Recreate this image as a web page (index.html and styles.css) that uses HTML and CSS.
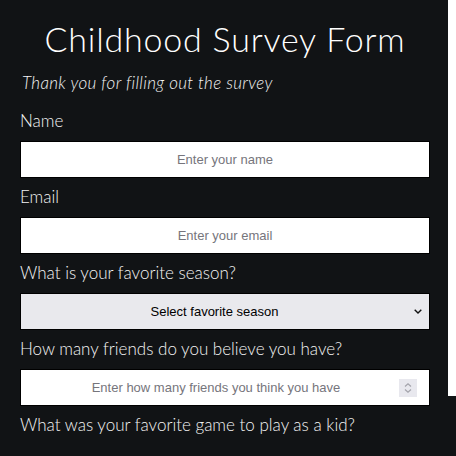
FILE: index.html
```html
<!DOCTYPE html>
<html lang="en">
<head>
<meta charset="utf-8">
<title>Childhood Survey Form</title>
<link rel="stylesheet" href="styles.css">
</head>
<body>
<div class="layout">
  <main class="page">
    <h1 class="title">Childhood Survey Form</h1>
    <p class="intro">Thank you for filling out the survey</p>
    <form class="survey">
      <label class="label" for="name">Name</label>
      <input class="box field" id="name" type="text" placeholder="Enter your name">

      <label class="label" for="email">Email</label>
      <input class="box field" id="email" type="email" placeholder="Enter your email">

      <label class="label" for="season">What is your favorite season?</label>
      <div class="box select-box">
        <select class="select" id="season">
          <option>Select favorite season</option>
          <option>Spring</option>
          <option>Summer</option>
          <option>Fall</option>
          <option>Winter</option>
        </select>
        <svg class="chevron" width="8" height="5" viewBox="0 0 8 5" aria-hidden="true"><path d="M0.7 0.7 L4 4 L7.3 0.7" fill="none" stroke="#111" stroke-width="1.4"/></svg>
      </div>

      <label class="label" for="friends">How many friends do you believe you have?</label>
      <div class="box number-box">
        <input class="number" id="friends" type="number" placeholder="Enter how many friends you think you have">
        <span class="spinner" aria-hidden="true">
          <svg width="18" height="18" viewBox="0 0 18 18"><path d="M6 7.5 L9 4.8 L12 7.5" fill="none" stroke="#a3a3ab" stroke-width="1.2"/><path d="M6 10.5 L9 13.2 L12 10.5" fill="none" stroke="#a3a3ab" stroke-width="1.2"/></svg>
        </span>
      </div>

      <label class="label" for="game">What was your favorite game to play as a kid?</label>
    </form>
  </main>
  <aside class="strip"></aside>
</div>
</body>
</html>
```

FILE: styles.css
```css
* { box-sizing: border-box; }

html, body {
  margin: 0;
  padding: 0;
}

body {
  background: #111315;
  color: #f4f4f4;
  font-family: Lato, "Open Sans", sans-serif;
  font-weight: 300;
}

.layout {
  display: flex;
  align-items: flex-start;
}

.page {
  width: 448px;
  padding: 0 18px 0 20px;
}

.strip {
  width: 8px;
  height: 396px;
  background: #ffffff;
}

.title {
  margin: 19px 0 0;
  font-size: 34px;
  line-height: 40px;
  font-weight: 300;
  letter-spacing: 0.8px;
  text-align: center;
  color: #ffffff;
}

.intro {
  margin: 14px 0 0 2px;
  font-size: 17px;
  line-height: 20px;
  font-style: italic;
  letter-spacing: 0.35px;
}

.survey {
  display: flex;
  flex-direction: column;
  margin-top: 18px;
}

.label {
  display: block;
  font-size: 17px;
  line-height: 20px;
  margin-bottom: 10px;
}

.box {
  width: 410px;
  height: 37px;
  border: 1px solid #000;
  margin-bottom: 9px;
  background: #ffffff;
}

.field {
  padding: 0 12px;
  font-family: "Liberation Sans", Arial, sans-serif;
  font-weight: 400;
  font-size: 13px;
  text-align: center;
  color: #222;
  outline: none;
}

.field::placeholder,
.number::placeholder {
  color: #76757c;
}

.select-box {
  display: flex;
  align-items: center;
  padding: 0 7px 0 12px;
  background: #e9e9ed;
}

.select {
  flex: 1;
  height: 100%;
  border: 0;
  background: transparent;
  -webkit-appearance: none;
  appearance: none;
  font-family: "Liberation Sans", Arial, sans-serif;
  font-weight: 400;
  font-size: 13px;
  color: #000;
  text-align: center;
  text-align-last: center;
  outline: none;
}

.chevron {
  margin-left: 18px;
  flex: none;
}

.number-box {
  display: flex;
  align-items: center;
  padding: 0 12px;
}

.number {
  flex: 1;
  min-width: 0;
  height: 100%;
  border: 0;
  padding: 0;
  font-family: "Liberation Sans", Arial, sans-serif;
  font-weight: 400;
  font-size: 13px;
  text-align: center;
  outline: none;
  -moz-appearance: textfield;
}

.number::-webkit-inner-spin-button,
.number::-webkit-outer-spin-button {
  -webkit-appearance: none;
  margin: 0;
}

.spinner {
  flex: none;
  display: flex;
  width: 18px;
  height: 18px;
  background: #e8e8ee;
}
```
